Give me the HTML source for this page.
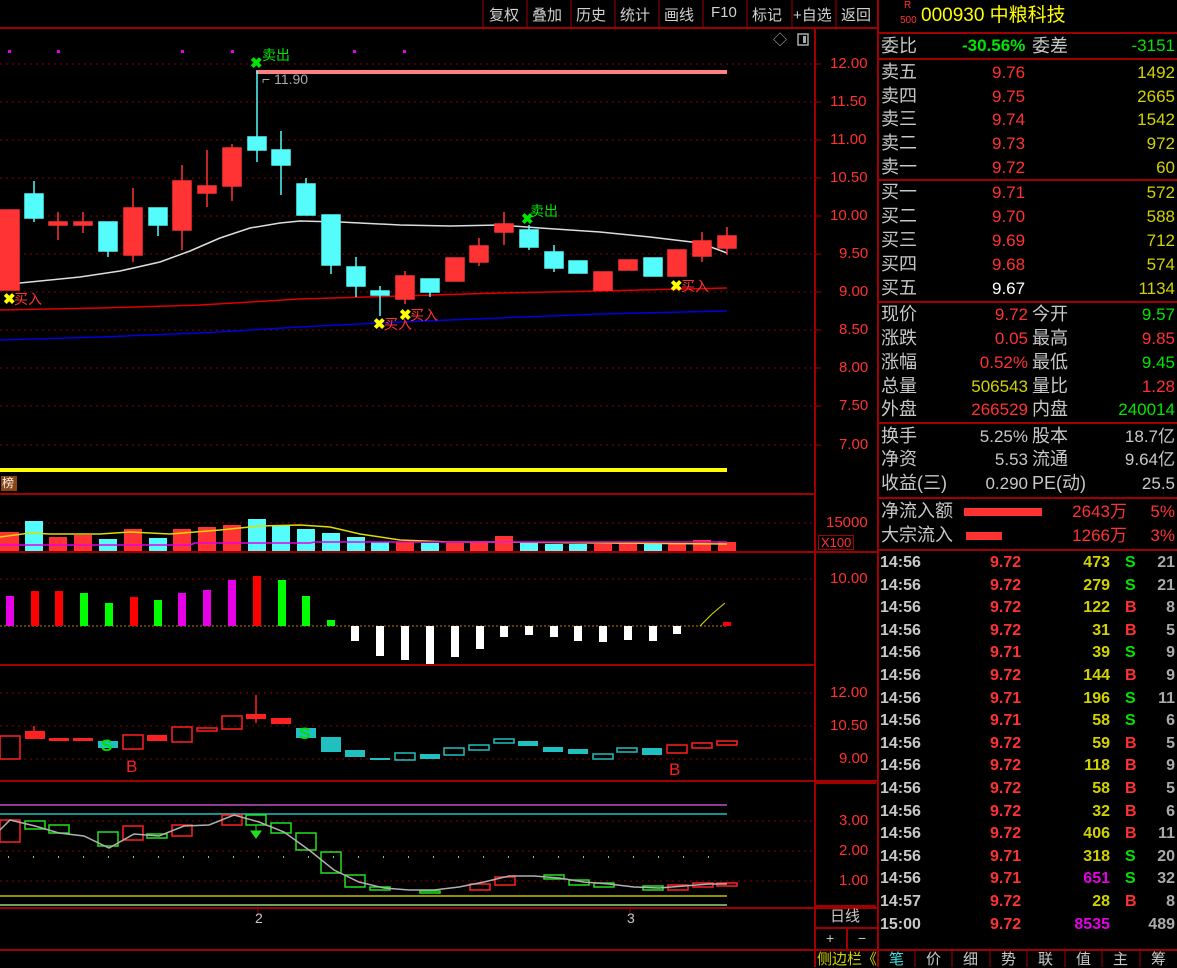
<!DOCTYPE html>
<html><head><meta charset="utf-8"><style>
body{margin:0;width:1177px;height:967px;background:#000;overflow:hidden;position:relative;font-family:"Liberation Sans","Noto Sans CJK SC",sans-serif}
.a{position:absolute;white-space:nowrap;line-height:1}
.rp{font-size:18px}
.w{color:#c8c8c8}.r{color:#ff3232}.g{color:#00e600}.y{color:#d2d200}.m{color:#e600e6}
.btn{position:absolute;top:4px;font-size:15px;color:#d0d0d0}
.tk .a{line-height:22.6px}
</style></head><body>
<svg width="1177" height="967" style="position:absolute;left:0;top:0">
<g stroke="#a00000" stroke-width="2" fill="none">
<line x1="0" y1="28" x2="878" y2="28"/>
<line x1="0" y1="494" x2="815" y2="494"/>
<line x1="0" y1="552" x2="878" y2="552"/>
<line x1="0" y1="665" x2="815" y2="665"/>
<line x1="0" y1="781" x2="878" y2="781"/>
<line x1="0" y1="908" x2="878" y2="908"/>
<line x1="815" y1="928" x2="878" y2="928"/>
<line x1="0" y1="950" x2="1177" y2="950"/>
<line x1="815" y1="28" x2="815" y2="967"/>
<line x1="878" y1="0" x2="878" y2="967"/>
<line x1="878" y1="33" x2="1177" y2="33"/>
<line x1="878" y1="59" x2="1177" y2="59"/>
<line x1="878" y1="180" x2="1177" y2="180"/>
<line x1="878" y1="302" x2="1177" y2="302"/>
<line x1="878" y1="423" x2="1177" y2="423"/>
<line x1="878" y1="498" x2="1177" y2="498"/>
<line x1="878" y1="550" x2="1177" y2="550"/>
<line x1="816" y1="783" x2="876" y2="783"/><line x1="816" y1="906" x2="876" y2="906"/>
<line x1="847" y1="928" x2="847" y2="950"/>
</g>
<g stroke="#a00000" stroke-width="1">
<line x1="483" y1="0" x2="483" y2="27"/><line x1="527" y1="0" x2="527" y2="27"/><line x1="571" y1="0" x2="571" y2="27"/><line x1="615" y1="0" x2="615" y2="27"/><line x1="659" y1="0" x2="659" y2="27"/><line x1="703" y1="0" x2="703" y2="27"/><line x1="747" y1="0" x2="747" y2="27"/><line x1="792" y1="0" x2="792" y2="27"/><line x1="836" y1="0" x2="836" y2="27"/>
<line x1="915" y1="950" x2="915" y2="967"/><line x1="952" y1="950" x2="952" y2="967"/><line x1="990" y1="950" x2="990" y2="967"/><line x1="1027" y1="950" x2="1027" y2="967"/><line x1="1065" y1="950" x2="1065" y2="967"/><line x1="1102" y1="950" x2="1102" y2="967"/><line x1="1140" y1="950" x2="1140" y2="967"/>
<line x1="258" y1="908" x2="258" y2="914"/><line x1="630" y1="908" x2="630" y2="914"/>
</g>
<g stroke="#8a0000" stroke-width="1" stroke-dasharray="2,4">
<line x1="0" y1="64" x2="815" y2="64"/><line x1="0" y1="102" x2="815" y2="102"/><line x1="0" y1="140" x2="815" y2="140"/><line x1="0" y1="178" x2="815" y2="178"/><line x1="0" y1="216" x2="815" y2="216"/><line x1="0" y1="254" x2="815" y2="254"/><line x1="0" y1="292" x2="815" y2="292"/><line x1="0" y1="330" x2="815" y2="330"/><line x1="0" y1="368" x2="815" y2="368"/><line x1="0" y1="406" x2="815" y2="406"/><line x1="0" y1="445" x2="815" y2="445"/>
<line x1="0" y1="523" x2="815" y2="523"/><line x1="0" y1="579" x2="815" y2="579"/>
<line x1="0" y1="693" x2="815" y2="693"/><line x1="0" y1="726" x2="815" y2="726"/><line x1="0" y1="759" x2="815" y2="759"/>
<line x1="0" y1="821" x2="815" y2="821"/><line x1="0" y1="851" x2="815" y2="851"/><line x1="0" y1="881" x2="815" y2="881"/>
</g>
<g fill="#e600e6"><rect x="8" y="50" width="3" height="3"/><rect x="57" y="50" width="3" height="3"/><rect x="181" y="50" width="3" height="3"/><rect x="231" y="50" width="3" height="3"/><rect x="353" y="50" width="3" height="3"/><rect x="403" y="50" width="3" height="3"/></g>
<rect x="256" y="70" width="471" height="4" fill="#ff8080"/>
<rect x="0" y="468" width="727" height="4" fill="#ffff00"/>
<polyline fill="none" stroke="#ddd" stroke-width="1.5" points="0,285 40,281 80,277 120,271 160,262 190,251 220,238 250,228 280,223 300,221 340,222 400,225 450,226 500,225 540,228 600,232 650,237 700,243 727,253"/>
<polyline fill="none" stroke="#e00000" stroke-width="1.5" points="0,310 100,308 200,305 300,299 400,296 500,293 600,291 727,288"/>
<polyline fill="none" stroke="#0000e0" stroke-width="1.5" points="0,340 100,337 200,333 300,327 400,322 500,318 600,314 727,311"/>
<g stroke-width="1.5">
<g stroke="#ff3333" fill="#ff3333">
<rect x="0" y="210" width="19" height="80"/>
<line x1="58" y1="212" x2="58" y2="240"/><rect x="49" y="222" width="18" height="3"/>
<line x1="83" y1="212" x2="83" y2="233"/><rect x="74" y="222" width="18" height="3"/>
<line x1="133" y1="188" x2="133" y2="262"/><rect x="124" y="208" width="18" height="47"/>
<line x1="182" y1="165" x2="182" y2="250"/><rect x="173" y="181" width="18" height="49"/>
<line x1="207" y1="150" x2="207" y2="207"/><rect x="198" y="186" width="18" height="7"/>
<line x1="232" y1="144" x2="232" y2="201"/><rect x="223" y="148" width="18" height="38"/>
<line x1="405" y1="271" x2="405" y2="304"/><rect x="396" y="276" width="18" height="23"/>
<rect x="446" y="258" width="18" height="23"/>
<line x1="479" y1="238" x2="479" y2="266"/><rect x="470" y="246" width="18" height="16"/>
<line x1="504" y1="212" x2="504" y2="245"/><rect x="495" y="224" width="18" height="8"/>
<rect x="594" y="272" width="18" height="18"/>
<rect x="619" y="260" width="18" height="10"/>
<rect x="668" y="250" width="18" height="26"/>
<line x1="702" y1="232" x2="702" y2="262"/><rect x="693" y="241" width="18" height="15"/>
<line x1="727" y1="227" x2="727" y2="255"/><rect x="718" y="236" width="18" height="12"/>
</g>
<g stroke="#54fcfc" fill="#54fcfc">
<line x1="34" y1="181" x2="34" y2="222"/><rect x="25" y="194" width="18" height="24"/>
<line x1="108" y1="222" x2="108" y2="257"/><rect x="99" y="222" width="18" height="29"/>
<line x1="158" y1="208" x2="158" y2="236"/><rect x="149" y="208" width="18" height="17"/>
<line x1="257" y1="71" x2="257" y2="162"/><rect x="248" y="137" width="18" height="13"/>
<line x1="281" y1="131" x2="281" y2="195"/><rect x="272" y="150" width="18" height="15"/>
<line x1="306" y1="178" x2="306" y2="215"/><rect x="297" y="184" width="18" height="31"/>
<line x1="331" y1="215" x2="331" y2="274"/><rect x="322" y="215" width="18" height="50"/>
<line x1="356" y1="257" x2="356" y2="297"/><rect x="347" y="267" width="18" height="19"/>
<line x1="380" y1="286" x2="380" y2="316"/><rect x="371" y="291" width="18" height="4"/>
<line x1="430" y1="279" x2="430" y2="297"/><rect x="421" y="279" width="18" height="13"/>
<line x1="529" y1="225" x2="529" y2="250"/><rect x="520" y="230" width="18" height="17"/>
<line x1="554" y1="245" x2="554" y2="272"/><rect x="545" y="252" width="18" height="16"/>
<rect x="569" y="261" width="18" height="12"/>
<rect x="644" y="258" width="18" height="18"/>
</g></g>
<g font-size="14" fill="#ff3232"><text x="14" y="304">买入</text><text x="384" y="329">买入</text><text x="410" y="320">买入</text><text x="681" y="291">买入</text></g>
<g font-size="14" fill="#00e600"><text x="262" y="60">卖出</text><text x="530" y="216">卖出</text></g>
<g font-size="15" font-weight="bold" fill="#ffff00"><text x="3" y="304">✖</text><text x="373" y="329">✖</text><text x="399" y="320">✖</text><text x="670" y="291">✖</text></g>
<g font-size="15" font-weight="bold" fill="#00e600"><text x="250" y="68">✖</text><text x="521" y="224">✖</text></g>
<text x="262" y="84" font-size="14" fill="#aaa">⌐ 11.90</text>
<text x="773" y="45" font-size="14" fill="#aaa">◇</text>
<rect x="798" y="34" width="10" height="11" fill="none" stroke="#aaa" stroke-width="1.5"/><rect x="803" y="36" width="3" height="7" fill="#aaa"/>
<rect x="1" y="476" width="16" height="15" fill="#8b4513"/>
<g fill="#ff3333"><rect x="0" y="532" width="19" height="19"/><rect x="49" y="537" width="18" height="14"/><rect x="74" y="535" width="18" height="16"/><rect x="124" y="529" width="18" height="22"/><rect x="173" y="529" width="18" height="22"/><rect x="198" y="527" width="18" height="24"/><rect x="223" y="525" width="18" height="26"/><rect x="396" y="542" width="18" height="9"/><rect x="446" y="543" width="18" height="8"/><rect x="470" y="542" width="18" height="9"/><rect x="495" y="536" width="18" height="15"/><rect x="594" y="544" width="18" height="7"/><rect x="619" y="543" width="18" height="8"/><rect x="668" y="543" width="18" height="8"/><rect x="693" y="540" width="18" height="11"/><rect x="718" y="542" width="18" height="9"/></g>
<g fill="#54fcfc"><rect x="25" y="521" width="18" height="30"/><rect x="99" y="539" width="18" height="12"/><rect x="149" y="538" width="18" height="13"/><rect x="248" y="519" width="18" height="32"/><rect x="272" y="526" width="18" height="25"/><rect x="297" y="529" width="18" height="22"/><rect x="322" y="533" width="18" height="18"/><rect x="347" y="537" width="18" height="14"/><rect x="371" y="542" width="18" height="9"/><rect x="421" y="543" width="18" height="8"/><rect x="520" y="543" width="18" height="8"/><rect x="545" y="544" width="18" height="7"/><rect x="569" y="544" width="18" height="7"/><rect x="644" y="544" width="18" height="7"/></g>
<polyline fill="none" stroke="#dddd00" stroke-width="1.5" points="0,537 30,533 50,534 100,534 130,532 170,534 220,530 260,526 300,525 330,527 360,534 400,540 450,542 500,542 600,543 727,544"/>
<polyline fill="none" stroke="#e600e6" stroke-width="1.5" points="0,545 190,545 195,543 310,543 315,542 727,542"/>
<line x1="0" y1="626" x2="727" y2="626" stroke="#c08000" stroke-dasharray="2,2"/>
<g fill="#e600e6"><rect x="6" y="596" width="8" height="30"/><rect x="178" y="593" width="8" height="33"/><rect x="203" y="590" width="8" height="36"/><rect x="228" y="580" width="8" height="46"/></g>
<g fill="#ff0000"><rect x="31" y="591" width="8" height="35"/><rect x="55" y="591" width="8" height="35"/><rect x="130" y="597" width="8" height="29"/><rect x="253" y="576" width="8" height="50"/><rect x="723" y="622" width="8" height="4"/></g>
<g fill="#00ff00"><rect x="80" y="593" width="8" height="33"/><rect x="105" y="603" width="8" height="23"/><rect x="154" y="600" width="8" height="26"/><rect x="278" y="580" width="8" height="46"/><rect x="302" y="596" width="8" height="30"/><rect x="327" y="620" width="8" height="6"/></g>
<g fill="#fff"><rect x="351" y="626" width="8" height="15"/><rect x="376" y="626" width="8" height="30"/><rect x="401" y="626" width="8" height="34"/><rect x="426" y="626" width="8" height="38"/><rect x="451" y="626" width="8" height="31"/><rect x="476" y="626" width="8" height="23"/><rect x="500" y="626" width="8" height="11"/><rect x="525" y="626" width="8" height="9"/><rect x="550" y="626" width="8" height="11"/><rect x="574" y="626" width="8" height="15"/><rect x="599" y="626" width="8" height="16"/><rect x="624" y="626" width="8" height="14"/><rect x="649" y="626" width="8" height="15"/><rect x="673" y="626" width="8" height="8"/></g>
<polyline fill="none" stroke="#dddd00" points="700,626 712,614 725,603"/>
<g stroke-width="1.5">
<g stroke="#ff2020" fill="none"><rect x="0" y="736" width="20" height="23"/><rect x="123" y="735" width="20" height="14"/><rect x="172" y="727" width="20" height="15"/><rect x="197" y="728" width="20" height="3"/><rect x="222" y="716" width="20" height="13"/><rect x="667" y="745" width="20" height="8"/><rect x="692" y="743" width="20" height="5"/><rect x="717" y="741" width="20" height="4"/>
<line x1="256" y1="695" x2="256" y2="723"/><line x1="34" y1="726" x2="34" y2="731"/></g>
<g fill="#ff2020"><rect x="25" y="731" width="20" height="8"/><rect x="49" y="738" width="20" height="3"/><rect x="73" y="738" width="20" height="3"/><rect x="147" y="735" width="20" height="6"/><rect x="246" y="714" width="20" height="5"/><rect x="271" y="718" width="20" height="6"/></g>
<g fill="#20c0c0"><rect x="98" y="741" width="20" height="7"/><rect x="296" y="728" width="20" height="10"/><rect x="321" y="737" width="20" height="15"/><rect x="345" y="750" width="20" height="7"/><rect x="370" y="758" width="20" height="2"/><rect x="420" y="754" width="20" height="5"/><rect x="518" y="741" width="20" height="5"/><rect x="543" y="747" width="20" height="5"/><rect x="568" y="749" width="20" height="5"/><rect x="642" y="748" width="20" height="7"/></g>
<g stroke="#20c0c0" fill="none"><rect x="395" y="753" width="20" height="7"/><rect x="444" y="748" width="20" height="7"/><rect x="469" y="745" width="20" height="5"/><rect x="494" y="739" width="20" height="4"/><rect x="593" y="754" width="20" height="5"/><rect x="617" y="748" width="20" height="4"/></g>
</g>
<g font-size="17" font-weight="bold" fill="#00e000"><text x="101" y="751">S</text><text x="299" y="739">S</text></g>
<g font-size="17" fill="#ff2020"><text x="126" y="772">B</text><text x="669" y="775">B</text></g>
<line x1="0" y1="805" x2="727" y2="805" stroke="#c050c0" stroke-width="1.5"/>
<line x1="0" y1="814" x2="727" y2="814" stroke="#20c0c0" stroke-width="1.5"/>
<line x1="0" y1="896" x2="727" y2="896" stroke="#c0c000" stroke-width="1.5"/>
<line x1="0" y1="905" x2="727" y2="905" stroke="#80e080" stroke-width="1.5"/>
<line x1="8" y1="857" x2="727" y2="857" stroke="#80c080" stroke-dasharray="1,24" stroke-width="2"/>
<g fill="none" stroke-width="1.5">
<g stroke="#ff2020"><rect x="0" y="820" width="20" height="22"/><rect x="123" y="826" width="20" height="14"/><rect x="172" y="825" width="20" height="11"/><rect x="222" y="815" width="20" height="10"/><rect x="470" y="884" width="20" height="6"/><rect x="495" y="877" width="20" height="8"/><rect x="668" y="885" width="20" height="5"/><rect x="693" y="883" width="20" height="4"/><rect x="717" y="883" width="20" height="3"/></g>
<g stroke="#20e020"><rect x="25" y="821" width="20" height="8"/><rect x="49" y="825" width="20" height="8"/><rect x="98" y="832" width="20" height="14"/><rect x="147" y="834" width="20" height="4"/><rect x="246" y="815" width="20" height="10"/><rect x="271" y="823" width="20" height="10"/><rect x="296" y="833" width="20" height="17"/><rect x="321" y="852" width="20" height="21"/><rect x="345" y="875" width="20" height="12"/><rect x="370" y="887" width="20" height="3"/><rect x="420" y="891" width="20" height="2"/><rect x="544" y="875" width="20" height="4"/><rect x="569" y="880" width="20" height="5"/><rect x="594" y="883" width="20" height="4"/><rect x="643" y="886" width="20" height="4"/></g>
</g>
<polyline fill="none" stroke="#b0b0b0" stroke-width="1.5" points="0,830 10,820 35,826 59,833 84,836 109,848 134,834 159,836 184,826 209,825 234,815 259,822 284,832 309,850 334,870 359,882 384,888 409,890 434,890 459,887 484,882 509,876 534,876 559,878 584,882 609,884 634,887 659,888 684,886 709,884 727,884"/>
<path d="M256 825 v8 M251 831 l5 7 l5 -7z" stroke="#20e020" fill="#20e020"/>
<rect x="964" y="508" width="78" height="8" fill="#ff3232"/>
<rect x="966" y="532" width="36" height="8" fill="#ff3232"/>
<g stroke="#a00000"><line x1="815" y1="64" x2="821" y2="64"/><line x1="815" y1="102" x2="821" y2="102"/><line x1="815" y1="140" x2="821" y2="140"/><line x1="815" y1="178" x2="821" y2="178"/><line x1="815" y1="216" x2="821" y2="216"/><line x1="815" y1="254" x2="821" y2="254"/><line x1="815" y1="292" x2="821" y2="292"/><line x1="815" y1="330" x2="821" y2="330"/><line x1="815" y1="368" x2="821" y2="368"/><line x1="815" y1="406" x2="821" y2="406"/><line x1="815" y1="445" x2="821" y2="445"/></g>
</svg>
<div class="btn" style="left:489px">复权</div><div class="btn" style="left:532px">叠加</div><div class="btn" style="left:576px">历史</div><div class="btn" style="left:620px">统计</div><div class="btn" style="left:664px">画线</div><div class="btn" style="left:711px">F10</div><div class="btn" style="left:752px">标记</div><div class="btn" style="left:793px">+自选</div><div class="btn" style="left:841px">返回</div>
<div class="a" style="left:904px;top:1px;font-size:10px;color:#ff3232">R</div>
<div class="a" style="left:900px;top:16px;font-size:10px;color:#ff3232">500</div>
<div class="a" style="left:921px;top:6px;font-size:19px;color:#ffff00">000930 中粮科技</div>
<div class="a r" style="font-size:15px;left:830px;top:56px">12.00</div>
<div class="a r" style="font-size:15px;left:830px;top:94px">11.50</div>
<div class="a r" style="font-size:15px;left:830px;top:132px">11.00</div>
<div class="a r" style="font-size:15px;left:830px;top:170px">10.50</div>
<div class="a r" style="font-size:15px;left:830px;top:208px">10.00</div>
<div class="a r" style="font-size:15px;left:839px;top:246px">9.50</div>
<div class="a r" style="font-size:15px;left:839px;top:284px">9.00</div>
<div class="a r" style="font-size:15px;left:839px;top:322px">8.50</div>
<div class="a r" style="font-size:15px;left:839px;top:360px">8.00</div>
<div class="a r" style="font-size:15px;left:839px;top:398px">7.50</div>
<div class="a r" style="font-size:15px;left:839px;top:437px">7.00</div>
<div class="a r" style="font-size:15px;left:826px;top:515px">15000</div>
<div class="a r" style="font-size:13px;left:818px;top:535px;border:1px solid #a00000;padding:0 2px">X100</div>
<div class="a r" style="font-size:15px;left:830px;top:571px">10.00</div>
<div class="a r" style="font-size:15px;left:830px;top:685px">12.00</div>
<div class="a r" style="font-size:15px;left:830px;top:718px">10.50</div>
<div class="a r" style="font-size:15px;left:839px;top:751px">9.00</div>
<div class="a r" style="font-size:15px;left:839px;top:813px">3.00</div>
<div class="a r" style="font-size:15px;left:839px;top:843px">2.00</div>
<div class="a r" style="font-size:15px;left:839px;top:873px">1.00</div>
<div class="a" style="left:2px;top:477px;font-size:12px;color:#eee">榜</div>
<div class="a w" style="left:255px;top:911px;font-size:14px">2</div>
<div class="a w" style="left:627px;top:911px;font-size:14px">3</div>
<div class="a w" style="left:830px;top:909px;font-size:15px">日线</div>
<div class="a w" style="left:826px;top:931px;font-size:14px">+</div>
<div class="a w" style="left:858px;top:931px;font-size:14px">−</div>
<div class="a y" style="left:817px;top:952px;font-size:15px">侧边栏《</div>
<div class="a w" style="left:889px;top:952px;font-size:15px;color:#40e0e0">笔</div>
<div class="a w" style="left:926px;top:952px;font-size:15px">价</div>
<div class="a w" style="left:963px;top:952px;font-size:15px">细</div>
<div class="a w" style="left:1001px;top:952px;font-size:15px">势</div>
<div class="a w" style="left:1038px;top:952px;font-size:15px">联</div>
<div class="a w" style="left:1076px;top:952px;font-size:15px">值</div>
<div class="a w" style="left:1113px;top:952px;font-size:15px">主</div>
<div class="a w" style="left:1151px;top:952px;font-size:15px">筹</div>
<div class="rp">
<div class="a w" style="left:881px;top:37px">委比</div><div class="a g" style="left:962px;top:37px;font-weight:bold;font-size:17px">-30.56%</div><div class="a w" style="left:1032px;top:37px">委差</div><div class="a g" style="right:2px;top:37px;font-size:17px">-3151</div>
<div class="a w" style="left:881px;top:63px">卖五</div><div class="a r" style="left:992px;top:64px;font-size:17px">9.76</div><div class="a y" style="right:2px;top:64px;font-size:17px">1492</div>
<div class="a w" style="left:881px;top:87px">卖四</div><div class="a r" style="left:992px;top:88px;font-size:17px">9.75</div><div class="a y" style="right:2px;top:88px;font-size:17px">2665</div>
<div class="a w" style="left:881px;top:110px">卖三</div><div class="a r" style="left:992px;top:111px;font-size:17px">9.74</div><div class="a y" style="right:2px;top:111px;font-size:17px">1542</div>
<div class="a w" style="left:881px;top:134px">卖二</div><div class="a r" style="left:992px;top:135px;font-size:17px">9.73</div><div class="a y" style="right:2px;top:135px;font-size:17px">972</div>
<div class="a w" style="left:881px;top:158px">卖一</div><div class="a r" style="left:992px;top:159px;font-size:17px">9.72</div><div class="a y" style="right:2px;top:159px;font-size:17px">60</div>
<div class="a w" style="left:881px;top:183px">买一</div><div class="a r" style="left:992px;top:184px;font-size:17px">9.71</div><div class="a y" style="right:2px;top:184px;font-size:17px">572</div>
<div class="a w" style="left:881px;top:207px">买二</div><div class="a r" style="left:992px;top:208px;font-size:17px">9.70</div><div class="a y" style="right:2px;top:208px;font-size:17px">588</div>
<div class="a w" style="left:881px;top:231px">买三</div><div class="a r" style="left:992px;top:232px;font-size:17px">9.69</div><div class="a y" style="right:2px;top:232px;font-size:17px">712</div>
<div class="a w" style="left:881px;top:255px">买四</div><div class="a r" style="left:992px;top:256px;font-size:17px">9.68</div><div class="a y" style="right:2px;top:256px;font-size:17px">574</div>
<div class="a w" style="left:881px;top:279px">买五</div><div class="a w" style="left:992px;top:280px;font-size:17px;color:#fff">9.67</div><div class="a y" style="right:2px;top:280px;font-size:17px">1134</div>
<div class="a w" style="left:881px;top:305px">现价</div><div class="a r" style="right:149px;top:306px;font-size:17px">9.72</div><div class="a w" style="left:1032px;top:305px">今开</div><div class="a g" style="right:2px;top:306px;font-size:17px">9.57</div>
<div class="a w" style="left:881px;top:329px">涨跌</div><div class="a r" style="right:149px;top:330px;font-size:17px">0.05</div><div class="a w" style="left:1032px;top:329px">最高</div><div class="a r" style="right:2px;top:330px;font-size:17px">9.85</div>
<div class="a w" style="left:881px;top:353px">涨幅</div><div class="a r" style="right:149px;top:354px;font-size:17px">0.52%</div><div class="a w" style="left:1032px;top:353px">最低</div><div class="a g" style="right:2px;top:354px;font-size:17px">9.45</div>
<div class="a w" style="left:881px;top:377px">总量</div><div class="a y" style="right:149px;top:378px;font-size:17px">506543</div><div class="a w" style="left:1032px;top:377px">量比</div><div class="a r" style="right:2px;top:378px;font-size:17px">1.28</div>
<div class="a w" style="left:881px;top:400px">外盘</div><div class="a r" style="right:149px;top:401px;font-size:17px">266529</div><div class="a w" style="left:1032px;top:400px">内盘</div><div class="a g" style="right:2px;top:401px;font-size:17px">240014</div>
<div class="a w" style="left:881px;top:427px">换手</div><div class="a w" style="right:149px;top:428px;font-size:17px">5.25%</div><div class="a w" style="left:1032px;top:427px">股本</div><div class="a w" style="right:2px;top:428px;font-size:17px">18.7亿</div>
<div class="a w" style="left:881px;top:450px">净资</div><div class="a w" style="right:149px;top:451px;font-size:17px">5.53</div><div class="a w" style="left:1032px;top:450px">流通</div><div class="a w" style="right:2px;top:451px;font-size:17px">9.64亿</div>
<div class="a w" style="left:881px;top:474px">收益(三)</div><div class="a w" style="right:149px;top:475px;font-size:17px">0.290</div><div class="a w" style="left:1032px;top:474px">PE(动)</div><div class="a w" style="right:2px;top:475px;font-size:17px">25.5</div>
<div class="a w" style="left:881px;top:502px">净流入额</div><div class="a r" style="right:50px;top:503px;font-size:17px">2643万</div><div class="a r" style="right:2px;top:503px;font-size:17px">5%</div>
<div class="a w" style="left:881px;top:526px">大宗流入</div><div class="a r" style="right:50px;top:527px;font-size:17px">1266万</div><div class="a r" style="right:2px;top:527px;font-size:17px">3%</div>
</div>
<div class="tk" style="position:absolute;left:880px;top:552px;width:297px;font-size:16px;font-weight:bold;line-height:22.6px">
<div style="position:relative;height:22.6px"><span class="a w" style="left:0">14:56</span><span class="a r" style="left:110px">9.72</span><span class="a y" style="right:67px">473</span><span class="a g" style="left:245px">S</span><span class="a w" style="right:2px;color:#aaa">21</span></div>
<div style="position:relative;height:22.6px"><span class="a w" style="left:0">14:56</span><span class="a r" style="left:110px">9.72</span><span class="a y" style="right:67px">279</span><span class="a g" style="left:245px">S</span><span class="a w" style="right:2px;color:#aaa">21</span></div>
<div style="position:relative;height:22.6px"><span class="a w" style="left:0">14:56</span><span class="a r" style="left:110px">9.72</span><span class="a y" style="right:67px">122</span><span class="a r" style="left:245px">B</span><span class="a w" style="right:2px;color:#aaa">8</span></div>
<div style="position:relative;height:22.6px"><span class="a w" style="left:0">14:56</span><span class="a r" style="left:110px">9.72</span><span class="a y" style="right:67px">31</span><span class="a r" style="left:245px">B</span><span class="a w" style="right:2px;color:#aaa">5</span></div>
<div style="position:relative;height:22.6px"><span class="a w" style="left:0">14:56</span><span class="a r" style="left:110px">9.71</span><span class="a y" style="right:67px">39</span><span class="a g" style="left:245px">S</span><span class="a w" style="right:2px;color:#aaa">9</span></div>
<div style="position:relative;height:22.6px"><span class="a w" style="left:0">14:56</span><span class="a r" style="left:110px">9.72</span><span class="a y" style="right:67px">144</span><span class="a r" style="left:245px">B</span><span class="a w" style="right:2px;color:#aaa">9</span></div>
<div style="position:relative;height:22.6px"><span class="a w" style="left:0">14:56</span><span class="a r" style="left:110px">9.71</span><span class="a y" style="right:67px">196</span><span class="a g" style="left:245px">S</span><span class="a w" style="right:2px;color:#aaa">11</span></div>
<div style="position:relative;height:22.6px"><span class="a w" style="left:0">14:56</span><span class="a r" style="left:110px">9.71</span><span class="a y" style="right:67px">58</span><span class="a g" style="left:245px">S</span><span class="a w" style="right:2px;color:#aaa">6</span></div>
<div style="position:relative;height:22.6px"><span class="a w" style="left:0">14:56</span><span class="a r" style="left:110px">9.72</span><span class="a y" style="right:67px">59</span><span class="a r" style="left:245px">B</span><span class="a w" style="right:2px;color:#aaa">5</span></div>
<div style="position:relative;height:22.6px"><span class="a w" style="left:0">14:56</span><span class="a r" style="left:110px">9.72</span><span class="a y" style="right:67px">118</span><span class="a r" style="left:245px">B</span><span class="a w" style="right:2px;color:#aaa">9</span></div>
<div style="position:relative;height:22.6px"><span class="a w" style="left:0">14:56</span><span class="a r" style="left:110px">9.72</span><span class="a y" style="right:67px">58</span><span class="a r" style="left:245px">B</span><span class="a w" style="right:2px;color:#aaa">5</span></div>
<div style="position:relative;height:22.6px"><span class="a w" style="left:0">14:56</span><span class="a r" style="left:110px">9.72</span><span class="a y" style="right:67px">32</span><span class="a r" style="left:245px">B</span><span class="a w" style="right:2px;color:#aaa">6</span></div>
<div style="position:relative;height:22.6px"><span class="a w" style="left:0">14:56</span><span class="a r" style="left:110px">9.72</span><span class="a y" style="right:67px">406</span><span class="a r" style="left:245px">B</span><span class="a w" style="right:2px;color:#aaa">11</span></div>
<div style="position:relative;height:22.6px"><span class="a w" style="left:0">14:56</span><span class="a r" style="left:110px">9.71</span><span class="a y" style="right:67px">318</span><span class="a g" style="left:245px">S</span><span class="a w" style="right:2px;color:#aaa">20</span></div>
<div style="position:relative;height:22.6px"><span class="a w" style="left:0">14:56</span><span class="a r" style="left:110px">9.71</span><span class="a m" style="right:67px">651</span><span class="a g" style="left:245px">S</span><span class="a w" style="right:2px;color:#aaa">32</span></div>
<div style="position:relative;height:22.6px"><span class="a w" style="left:0">14:57</span><span class="a r" style="left:110px">9.72</span><span class="a y" style="right:67px">28</span><span class="a r" style="left:245px">B</span><span class="a w" style="right:2px;color:#aaa">8</span></div>
<div style="position:relative;height:22.6px"><span class="a w" style="left:0">15:00</span><span class="a r" style="left:110px">9.72</span><span class="a m" style="right:67px">8535</span><span class="a w" style="right:2px;color:#aaa">489</span></div>
</div>
</body></html>
